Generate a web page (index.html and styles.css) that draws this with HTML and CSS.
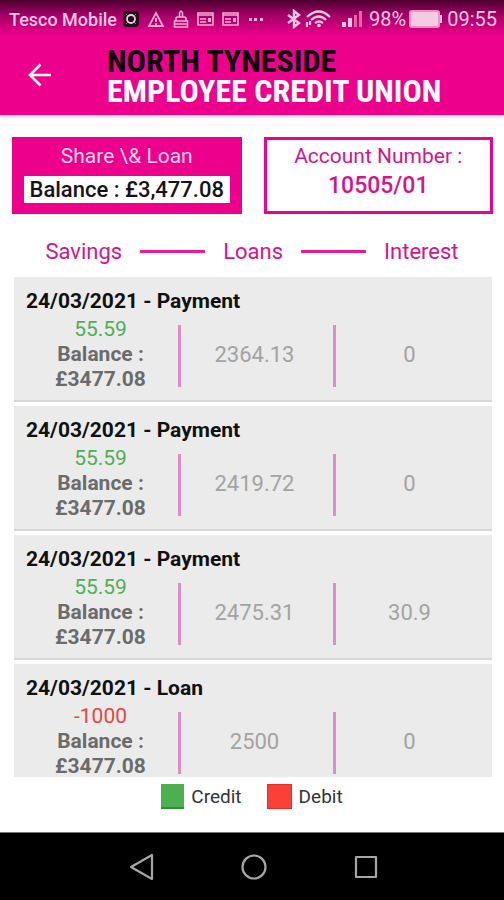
FILE: index.html
```html
<!DOCTYPE html>
<html lang="en">
<head>
<meta charset="utf-8">
<meta name="viewport" content="width=device-width, initial-scale=1">
<title>North Tyneside Employee Credit Union</title>
<link rel="stylesheet" href="styles.css">
</head>
<body>
<div class="top">
  <div class="status">
    <span class="carrier">Tesco Mobile</span>
    <svg class="badge" width="16" height="16" viewBox="0 0 16 16"><rect width="16" height="16" rx="4" fill="#21121b"/><circle cx="8" cy="8" r="4" fill="none" stroke="#f3c9df" stroke-width="1.800"/><path d="M3 3l2 2M13 3l-2 2M3 13l2-2M13 13l-2-2" stroke="#9b7c8c"/></svg>
    <svg width="18" height="18" viewBox="0 0 18 18" fill="none" stroke="#f5acd4" stroke-width="1.800"><path d="M9 3L16 16H2zM9 8v4M9 13v2"/></svg>
    <svg width="16" height="20" viewBox="0 0 16 20" fill="none" stroke="#f5acd4" stroke-width="1.600"><path d="M6.500 8V4q1.500-4 3 0v4M3 12V9.500Q3 8 5 8h6q2 0 2 1.500V12M1.500 12h13v6h-13zM2 15h12"/></svg>
    <svg width="17" height="16" viewBox="0 0 17 16" fill="none" stroke="#f5acd4" stroke-width="1.600"><path d="M1 2h15v12H1zM1 4h15M3 8h6M3 11h6"/><path d="M11 7h3v4h-3z" fill="#f5acd4" stroke="none"/></svg>
    <svg width="17" height="16" viewBox="0 0 17 16" fill="none" stroke="#f5acd4" stroke-width="1.600"><path d="M1 2h15v12H1zM1 4h15M3 8h6M3 11h6"/><path d="M11 7h3v4h-3z" fill="#f5acd4" stroke="none"/></svg>
    <svg class="dots" width="14" height="4" viewBox="0 0 14 4" fill="#f5acd4"><path d="M0 1h3v3H0zM5 1h3v3H5zM11 1h3v3h-3z"/></svg>
    <div class="system">
      <svg width="14" height="20" viewBox="0 0 14 20" fill="none" stroke="#fbc6e2" stroke-width="2.400"><path d="M1 6l11 8-5 4V2l5 4-11 8"/></svg>
      <svg class="wifi" width="26" height="18" viewBox="0 0 26 18" fill="none" stroke="#fbc6e2" stroke-width="2.200"><path d="M2 7Q14-4 25 7M6 10q8-7 15 0M10 13q4-3 8 0M2 12v5M5 11v4"/><circle cx="14" cy="15.500" r="1.800" fill="#fbc6e2" stroke="none"/></svg>
      <svg class="signal" width="22" height="18" viewBox="0 0 22 18"><path d="M1 12h4v5H1zM7 8h4v9H7z" fill="#fbc6e2"/><path d="M13 5h3v12h-3zM18 1h3v16h-3z" fill="#e264a9"/></svg>
      <span>98%</span>
      <svg class="battery" width="33" height="18" viewBox="0 0 33 18"><rect x="1" y="1" width="29" height="16" rx="2" fill="#f4cce2" stroke="#f58dc6" stroke-width="2"/><path d="M31 5h2v8h-2z" fill="#f4cce2"/></svg>
      <span>09:55</span>
    </div>
  </div>
  <header class="appbar">
    <button class="back" aria-label="Back"><svg width="24" height="24" viewBox="0 0 24 24" fill="none" stroke="#fff" stroke-width="2.600"><path d="M23 12H2M12.500 1.500L2 12l10.500 10.500"/></svg></button>
    <h1 class="brand"><span class="brand-dark">NORTH TYNESIDE</span><span>EMPLOYEE CREDIT UNION</span></h1>
  </header>
</div>
<main>
  <section class="summary">
    <div class="panel share"><span>Share \&amp; Loan</span><span class="balance">Balance : £3,477.08</span></div>
    <div class="panel account"><span>Account Number :</span><span class="number">10505/01</span></div>
  </section>
  <div class="labels"><span>Savings</span><i></i><span>Loans</span><i></i><span>Interest</span></div>
  <section class="list">
    <article class="entry">
      <h2>24/03/2021 - Payment</h2>
      <div class="amounts"><div class="cell savings"><span class="credit">55.59</span><b>Balance :</b><b>£3477.08</b></div><div class="cell value">2364.13</div><div class="cell value">0</div></div>
    </article>
    <article class="entry">
      <h2>24/03/2021 - Payment</h2>
      <div class="amounts"><div class="cell savings"><span class="credit">55.59</span><b>Balance :</b><b>£3477.08</b></div><div class="cell value">2419.72</div><div class="cell value">0</div></div>
    </article>
    <article class="entry">
      <h2>24/03/2021 - Payment</h2>
      <div class="amounts"><div class="cell savings"><span class="credit">55.59</span><b>Balance :</b><b>£3477.08</b></div><div class="cell value">2475.31</div><div class="cell value">30.9</div></div>
    </article>
    <article class="entry">
      <h2>24/03/2021 - Loan</h2>
      <div class="amounts"><div class="cell savings"><span class="debit">-1000</span><b>Balance :</b><b>£3477.08</b></div><div class="cell value">2500</div><div class="cell value">0</div></div>
    </article>
  </section>
  <div class="legend"><span class="key green">Credit</span><span class="key red">Debit</span></div>
</main>
<nav class="nav">
  <button aria-label="Back"><svg width="28" height="28" viewBox="0 0 28 28" fill="none" stroke="#a6a6a6" stroke-width="2.200" stroke-linejoin="round"><path d="M24 2v24L3 14z"/></svg></button>
  <button aria-label="Home"><svg width="28" height="28" viewBox="0 0 28 28" fill="none" stroke="#a6a6a6" stroke-width="2.200"><circle cx="14" cy="14" r="11.500"/></svg></button>
  <button aria-label="Recent apps"><svg width="28" height="28" viewBox="0 0 28 28" fill="none" stroke="#a6a6a6" stroke-width="2.200" stroke-linejoin="round"><path d="M4 4h20v20H4z"/></svg></button>
</nav>
</body>
</html>
```
FILE: styles.css
```css
* { box-sizing: border-box; }
body {
  margin: 0;
  height: 100vh;
  display: flex;
  flex-direction: column;
  background: #fff;
  font-family: Roboto, "Liberation Sans", sans-serif;
  font-size: 21px;
  line-height: 25px;
  overflow: hidden;
}
button { padding: 0; border: 0; background: none; display: flex; }
svg { display: block; flex: none; }

.top {
  background: linear-gradient(#4c0030, #a80068 16px, #ec008c 36px);
  box-shadow: 0 1px 4px rgba(0, 0, 0, .3);
  flex: none;
}
.status {
  display: flex;
  align-items: center;
  height: 38px;
  padding: 0 7px 0 9px;
  color: #fbc6e2;
  font-size: 18px;
}
.carrier { font-weight: 500; }
.badge { margin: 0 8px 0 6px; }
.status > svg + svg + svg { margin-left: 8px; }
.status > .dots { margin-left: 10px; }
.system { display: flex; align-items: center; margin-left: auto; font-size: 20px; }
.wifi { margin-left: 4px; }
.signal { margin: 0 6px 0 10px; }
.battery { margin: 0 5px 0 3px; }

.appbar { display: flex; height: 77px; padding-left: 28px; }
.back { height: 24px; margin-top: 25px; }
.brand {
  display: flex;
  flex-direction: column;
  margin: 8px 0 0 55px;
  color: #fff;
  font: bold 32px/30px "Liberation Sans Narrow", "Roboto Condensed", sans-serif;
  white-space: nowrap;
}
.brand-dark { color: #0b0009; }

main { flex: 1; min-height: 0; display: flex; flex-direction: column; }
.summary {
  display: grid;
  grid-template-columns: 1fr 1fr;
  gap: 22px;
  padding: 22px 11px 0 12px;
}
.panel {
  display: flex;
  flex-direction: column;
  align-items: center;
  height: 77px;
  padding-top: 4px;
  border: 3px solid #ec008c;
  color: #d6148a;
  line-height: 24px;
  white-space: nowrap;
}
.share { background: #ec008c; color: #fdd5ea; }
.balance { margin-top: 8px; padding: 0 6px; background: #fff; color: #16121a; line-height: 27px; font-weight: 500; font-size: 22px; }
.number { margin-top: 6px; font-weight: 500; font-size: 23px; }

.labels {
  display: flex;
  align-items: center;
  justify-content: center;
  gap: 18px;
  margin: 25px 0 13px;
  color: #d6148a;
  font-size: 22px;
}
.labels i { width: 65px; height: 3px; background: #ec1b93; }

.list { flex: 1; min-height: 0; overflow: hidden; padding: 0 12px 0 14px; }
.entry {
  margin-bottom: 4px;
  padding: 10px 0 8px;
  background: #ebebeb;
  border-bottom: 2px solid #d8d8d8;
}
.entry h2 { margin: 0 12px 2px; font-size: 21px; line-height: 28px; color: #111; }
.amounts { display: grid; grid-template-columns: repeat(3, 1fr); padding: 0 4px 0 9px; }
.savings { display: flex; flex-direction: column; align-items: center; }
.savings b { color: #6b6b6b; }
.credit { color: #50ae55; }
.debit { color: #e8463e; }
.value { display: flex; align-items: center; justify-content: center; padding-right: 5px; color: #a3a3a3; font-size: 22px; }
.value::before { content: ""; width: 3px; align-self: stretch; margin: 8px auto 5px 0; background: #dd8fc4; }
.value::after { content: ""; margin-left: auto; }

.legend {
  display: flex;
  justify-content: center;
  gap: 25px;
  height: 55px;
  padding-top: 7px;
  color: #333;
}
.key { display: flex; align-items: center; gap: 7px; height: 24px; font-size: 19px; }
.key::before { content: ""; width: 23px; height: 23px; }
.green::before { background: #4caf50; border-bottom: 2px solid #26962d; }
.red::before { background: #fb4037; border: 1px solid #ec2d27; }

.nav {
  display: flex;
  justify-content: center;
  align-items: center;
  gap: 84px;
  height: 68px;
  padding-left: 3px;
  flex: none;
  background: #000;
  border-top: 1px solid #777;
}
```
